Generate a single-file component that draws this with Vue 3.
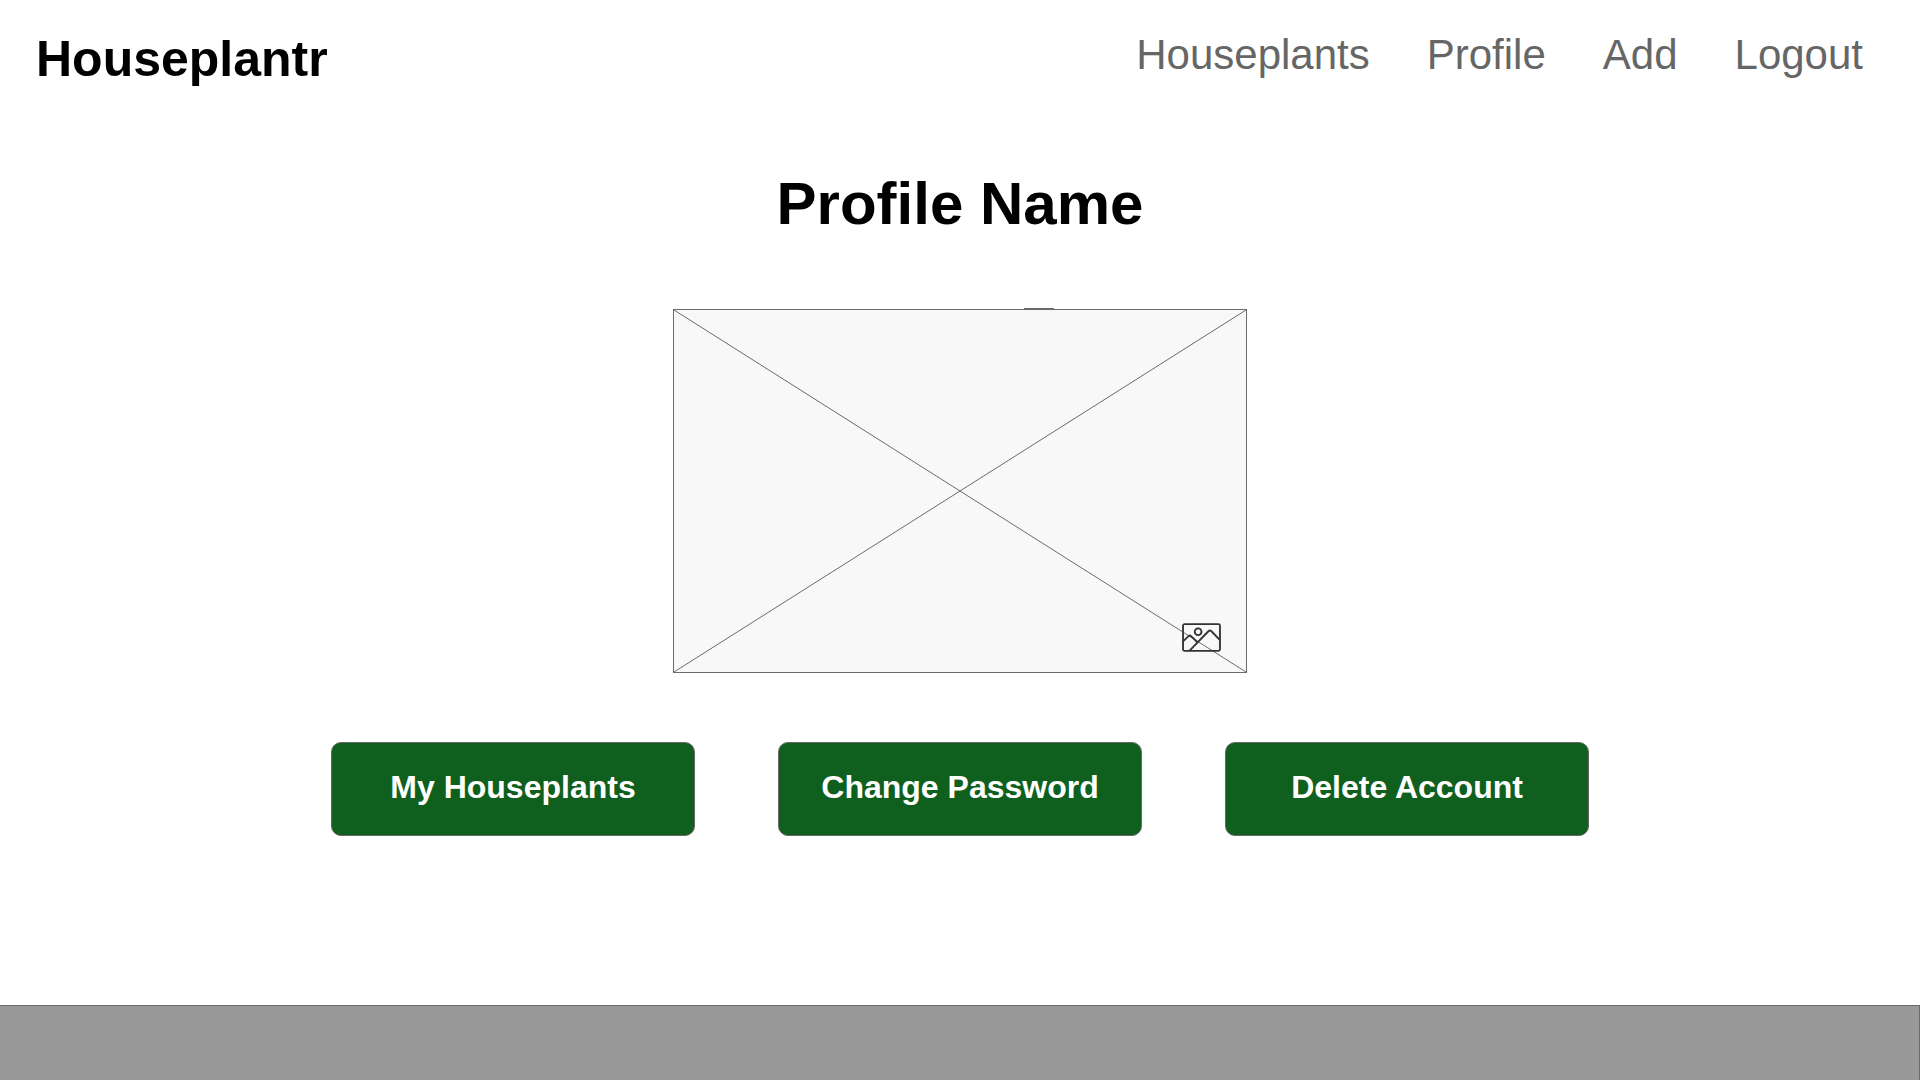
<script setup>
const links = ['Houseplants', 'Profile', 'Add', 'Logout']
const actions = ['My Houseplants', 'Change Password', 'Delete Account']
</script>

<template>
  <div class="page">
    <header class="header">
      <a class="logo" href="#">Houseplantr</a>
      <nav class="nav">
        <a v-for="link in links" :key="link" href="#">{{ link }}</a>
      </nav>
    </header>

    <main class="main">
      <h1 class="name">Profile Name</h1>

      <div class="photo">
        <span class="tab"></span>
        <svg class="cross" viewBox="0 0 572 362" preserveAspectRatio="none" aria-hidden="true">
          <path d="M0 0L572 362M0 362L572 0" />
        </svg>
        <svg class="icon" viewBox="0 0 38 28" role="img" aria-label="Profile picture">
          <rect x="1" y="1" width="36" height="26" rx="1.5" />
          <circle cx="15.7" cy="8.4" r="3.3" />
          <path d="M1 17.8L6.4 12.6Q7.6 11.5 8.8 12.6L15 18.6M7.2 27L25.7 7.9Q27.2 6.6 28.7 7.9L37 16.6" />
        </svg>
      </div>

      <div class="actions">
        <button v-for="action in actions" :key="action" type="button">{{ action }}</button>
      </div>
    </main>

    <footer class="footer"></footer>
  </div>
</template>

<style>
body {
  margin: 0;
  background: #fff;
}
</style>

<style scoped>
.page {
  display: flex;
  flex-direction: column;
  min-height: 100vh;
  font-family: "Liberation Sans", Arial, sans-serif;
  color: #000;
}

.header {
  display: flex;
  justify-content: space-between;
  align-items: flex-start;
  padding: 30px 57px 0 36px;
}

.logo {
  font-size: 50px;
  line-height: 58px;
  font-weight: 700;
  color: #000;
  text-decoration: none;
}

.nav {
  display: flex;
  gap: 57px;
}

.nav a {
  font-size: 42px;
  line-height: 50px;
  color: #666;
  text-decoration: none;
}

.main {
  flex: 1;
  display: flex;
  flex-direction: column;
  align-items: center;
  padding: 82px 24px 48px;
}

.name {
  margin: 0 0 71px;
  font-size: 60px;
  line-height: 68px;
  font-weight: 700;
}

.photo {
  position: relative;
  box-sizing: border-box;
  width: 574px;
  max-width: 100%;
  height: 364px;
  border: 1px solid #6b6b6b;
  background: #f8f8f8;
}

.tab {
  position: absolute;
  top: -2px;
  left: 350px;
  width: 30px;
  height: 1px;
  background: #6b6b6b;
}

.cross {
  display: block;
  width: 100%;
  height: 100%;
  fill: none;
  stroke: #6b6b6b;
  stroke-width: 1;
}

.icon {
  position: absolute;
  right: 25px;
  bottom: 20px;
  width: 39px;
  height: 29px;
  fill: none;
  stroke: #333;
  stroke-width: 1.8;
}

.actions {
  display: flex;
  flex-wrap: wrap;
  justify-content: center;
  gap: 24px 83px;
  margin-top: 69px;
}

.actions button {
  box-sizing: border-box;
  width: 364px;
  height: 94px;
  padding: 0 0 4px;
  border: 1px solid #666;
  border-radius: 10px;
  background: #0f601e;
  color: #fff;
  font-family: inherit;
  font-size: 32px;
  line-height: 36px;
  font-weight: 700;
  cursor: pointer;
}

.footer {
  box-sizing: border-box;
  height: 75px;
  border: 1px solid #6b6b6b;
  border-width: 1px 1px 0 0;
  background: #999;
}
</style>
